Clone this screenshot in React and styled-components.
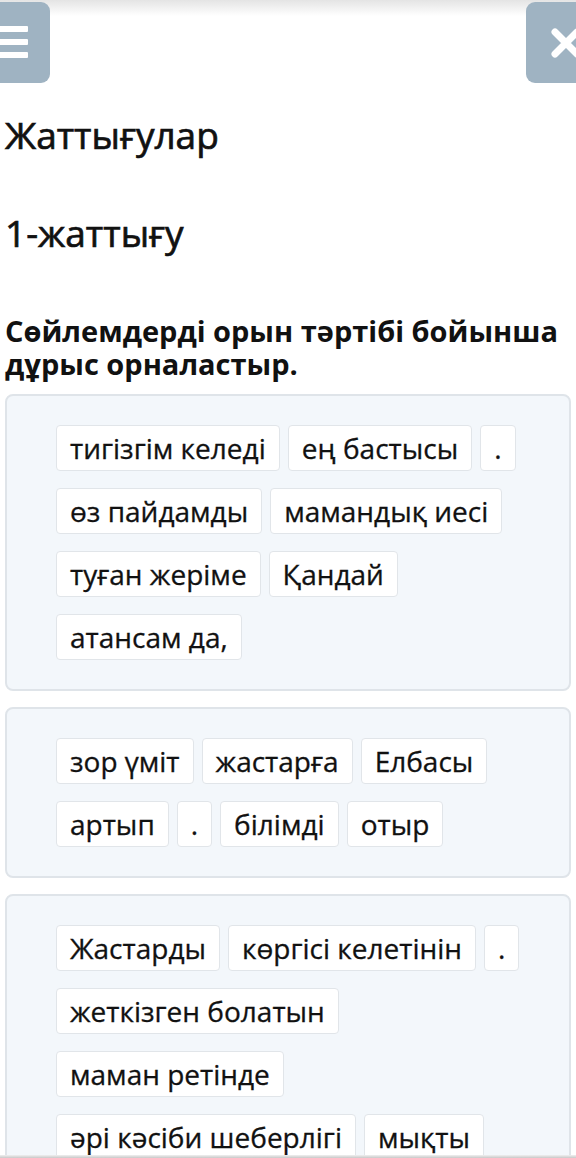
import React from 'react'
import styled, { createGlobalStyle } from 'styled-components'

const GlobalStyle = createGlobalStyle`
  body {
    margin: 0;
    background: #fff;
    font-family: "Open Sans", "Noto Sans", sans-serif;
    color: #111;
    overflow: hidden;
  }
`

const exercises = [
    ['тигізгім келеді', 'ең бастысы', '.', 'өз пайдамды', 'мамандық иесі', 'туған жеріме', 'Қандай', 'атансам да,'],
    ['зор үміт', 'жастарға', 'Елбасы', 'артып', '.', 'білімді', 'отыр'],
    ['Жастарды', 'көргісі келетінін', '.', 'жеткізген болатын', 'маман ретінде', 'әрі кәсіби шеберлігі', 'мықты'],
]

function App() {
    return (
        <Page>
            <GlobalStyle />
            <TopBar>
                <SquareButton side="left" aria-label="menu">
                    <MenuLines>
                        <span />
                        <span />
                        <span />
                    </MenuLines>
                </SquareButton>
                <SquareButton side="right" aria-label="close">
                    <svg width="34" height="34" viewBox="0 0 34 34">
                        <path d="M6 6 L28 28 M28 6 L6 28" stroke="#fff" strokeWidth="7" strokeLinecap="round" />
                    </svg>
                </SquareButton>
            </TopBar>
            <Content>
                <Title>Жаттығулар</Title>
                <SubTitle>1-жаттығу</SubTitle>
                <Question>Сөйлемдерді орын тәртібі бойынша дұрыс орналастыр.</Question>
                {exercises.map((words, i) => (
                    <Card key={i}>
                        {words.map((w, j) => (
                            <Chip key={j}>{w}</Chip>
                        ))}
                    </Card>
                ))}
            </Content>
            <BottomEdge />
        </Page>
    )
}

export default App

const Page = styled.div`
    width: 576px;
    height: 1158px;
    overflow: hidden;
    position: relative;
`
const TopBar = styled.div`
    display: flex;
    justify-content: space-between;
    align-items: flex-start;
    height: 83px;
    padding-top: 2px;
    box-sizing: border-box;
    background: linear-gradient(#e4e4e4, #fff 16px);
    overflow: hidden;
`
const SquareButton = styled.div`
    width: 80px;
    height: 81px;
    border-radius: 9px;
    background-color: #9fb3c2;
    display: flex;
    align-items: center;
    justify-content: center;
    margin-left: ${p => (p.side === 'left' ? '-30px' : '0')};
    margin-right: ${p => (p.side === 'right' ? '-30px' : '0')};
    flex-shrink: 0;
`
const MenuLines = styled.div`
    display: flex;
    flex-direction: column;
    gap: 7px;
    margin-top: -2px;
    span {
        display: block;
        width: 36px;
        height: 6px;
        background: #fff;
        border-radius: 1px;
    }
`
const Content = styled.div`
    padding: 0 5px;
`
const Title = styled.h1`
    margin: 28px 0 0;
    font-size: 37px;
    font-weight: 400;
    line-height: 48px;
    -webkit-text-stroke: 0.7px #111;
`
const SubTitle = styled(Title)`
    margin-top: 50px;
`
const Question = styled.p`
    margin: 57px 0 0;
    font-size: 29px;
    font-weight: 700;
    line-height: 33px;
`
const Card = styled.div`
    margin-top: 14px;
    background-color: #f3f7fb;
    border: 2px solid #dfe4e9;
    border-radius: 8px;
    padding: 29px 49px;
    display: flex;
    flex-wrap: wrap;
    gap: 17px 8px;
    & + & {
        margin-top: 16px;
    }
`
const Chip = styled.div`
    height: 46px;
    box-sizing: border-box;
    padding: 0 13px;
    background-color: #fff;
    border: 1px solid #e1e5e9;
    border-radius: 4px;
    font-size: 28px;
    line-height: 44px;
    color: #111;
    white-space: nowrap;
    -webkit-text-stroke: 0.3px #111;
`
const BottomEdge = styled.div`
    position: absolute;
    left: 0;
    right: 0;
    bottom: 0;
    height: 3px;
    background: linear-gradient(#f0f0f0, #c8c8c8);
`
